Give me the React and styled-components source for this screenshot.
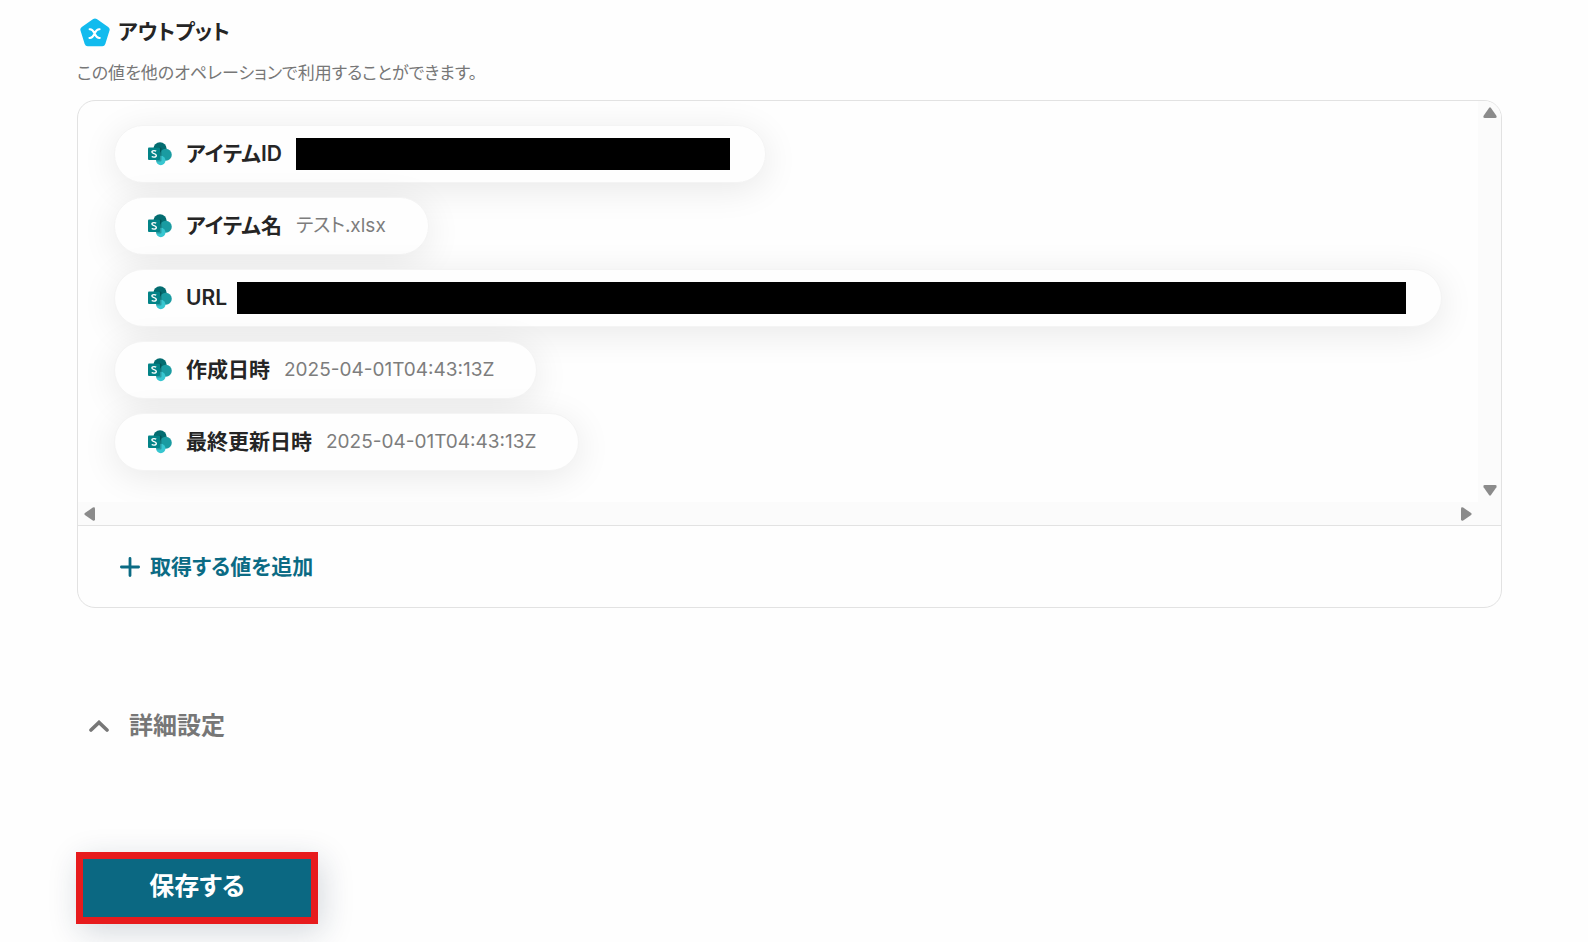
import React, { useState } from "react";
import styled, { createGlobalStyle } from "styled-components";

const GlobalStyle = createGlobalStyle`
  * {
    box-sizing: border-box;
  }
  body {
    margin: 0;
    background: #fefefe;
    color: #252525;
    font-family: Inter, 'Noto Sans CJK JP', sans-serif;
    font-feature-settings: 'palt';
    line-height: 1.5;
  }
  button {
    font-family: inherit;
    font-feature-settings: inherit;
    line-height: inherit;
    cursor: pointer;
  }
`

const Page = styled.main`
  display: flex;
  flex-direction: column;
  align-items: flex-start;
  padding: 14px 86px 18px 77px;
`

const Heading = styled.h2`
  display: flex;
  align-items: center;
  gap: 8px;
  margin: 0;
  padding-left: 3px;
  height: 36px;
  font-size: 21px;
  font-weight: 700;
`

const Description = styled.p`
  margin: 11px 0 15px;
  font-size: 17px;
  line-height: 24px;
  color: #777777;
`

const Panel = styled.section`
  width: 100%;
  border: 1px solid #e2e2e2;
  border-radius: 18px;
  overflow: hidden;
`

const ScrollArea = styled.div`
  display: grid;
  grid-template-columns: minmax(0, 1fr) 23px;
  grid-template-rows: auto 23px;
  border-bottom: 1px solid #e2e2e2;
`

const Track = styled.div`
  display: flex;
  flex-direction: ${props => props.$vertical ? "column" : "row"};
  justify-content: space-between;
  align-items: center;
  padding: ${props => props.$vertical ? "5px 0" : "0 5px"};
  background: #fbfbfb;
`

const Corner = styled.div`
  background: #fbfbfb;
`

const ArrowButton = styled.button`
  display: flex;
  padding: 0;
  border: none;
  background: none;
`

const ChipList = styled.ul`
  display: flex;
  flex-direction: column;
  align-items: flex-start;
  gap: 14px;
  margin: 0;
  padding: 24px 36px 31px;
  list-style: none;
  overflow: hidden;
`

const Chip = styled.li`
  display: flex;
  align-items: center;
  width: ${props => props.$full ? "100%" : "auto"};
  max-width: 100%;
  height: 58px;
  padding: 0 ${props => props.$masked ? "35px" : "42px"} 0 33px;
  border: 1px solid #f4f4f4;
  border-radius: 29px;
  background: #fefefe;
  box-shadow: 0 6px 36px rgba(0, 0, 0, 0.09);
`

const ChipLabel = styled.span`
  margin-left: 14px;
  font-size: 21px;
  font-weight: 600;
  white-space: nowrap;
`

const ChipValue = styled.span`
  margin-left: 14px;
  font-size: 19px;
  color: #7d7d7d;
  white-space: nowrap;
`

const Mask = styled.span`
  flex: ${props => props.$full ? "1" : "0 1 434px"};
  width: ${props => props.$full ? "auto" : "434px"};
  height: 32px;
  margin-left: ${props => props.$full ? "10px" : "14px"};
  background: #000000;
`

const AddButton = styled.button`
  display: flex;
  align-items: center;
  gap: 10px;
  height: 81px;
  padding: 0 42px;
  border: none;
  background: none;
  color: #0b6b84;
  font-size: 21px;
  font-weight: 600;
`

const DetailButton = styled.button`
  display: flex;
  align-items: center;
  gap: 20px;
  height: 40px;
  margin-top: 98px;
  padding: 0 12px;
  border: none;
  background: none;
  color: #777777;
  font-size: 24px;
  font-weight: 600;
`

const SaveButton = styled.button`
  width: 242px;
  height: 72px;
  margin: 106px 0 0 -1px;
  padding: 0 0 2px;
  border: 7px solid #e71b1d;
  background: #0b6882;
  color: #ffffff;
  font-size: 25px;
  font-weight: 700;
  box-shadow: 4px 8px 32px rgba(20, 45, 70, 0.18);
`

const OutputIcon = () => (
  <svg width="30" height="29" viewBox="0 0 30 29" aria-hidden="true">
    <path
      d="M13.2 1.1Q15 0 16.8 1.1L28.2 9Q30.2 10.4 29.5 12.6L25.3 26Q24.5 28.3 22.3 28.3H7.7Q5.5 28.3 4.7 26L.5 12.6Q-.2 10.4 1.8 9Z"
      fill="#12bbee"
    />
    <path
      d="M9.6 11.2C12.6 10.8 13.2 12.8 14.6 15.6S16.8 20.4 19.8 20M19.6 11.2C16.6 10.8 16 12.8 14.6 15.6S12.4 20.4 9.4 20"
      fill="none"
      stroke="#ffffff"
      strokeWidth="2"
      strokeLinecap="round"
    />
  </svg>
)

const SharePointIcon = () => (
  <svg width="24" height="24" viewBox="0 0 24 24" aria-hidden="true">
    <circle cx="12" cy="7" r="6.7" fill="#036c70" />
    <circle cx="17.8" cy="12.8" r="6" fill="#1a9ba1" />
    <circle cx="12.8" cy="18.5" r="4.7" fill="#37c6d0" />
    <path d="M6 5.5h6.5q1 0 1 1v12q0 1-1 1H8.3Q8 18.5 8.3 17L6 10Z" fill="#000000" opacity="0.22" />
    <rect y="5.5" width="12" height="12.5" rx="1" fill="#038387" />
    <path
      d="M8.2 9.2Q7.2 8.6 6 8.6C4.7 8.6 3.9 9.2 3.9 10.1C3.9 12.1 8.3 11.2 8.3 13.4C8.3 14.5 7.3 15.1 5.9 15.1Q4.6 15.1 3.7 14.5"
      fill="none"
      stroke="#ffffff"
      strokeWidth="1.4"
    />
  </svg>
)

const angles = { up: 0, right: 90, down: 180, left: 270 };

const Arrow = ({ direction, label }) => (
  <ArrowButton type="button" aria-label={label}>
    <svg width="14" height="14" viewBox="0 0 14 14">
      <path
        d="M6 1.9Q7 .8 8 1.9L13.4 9.8Q14.2 12 12.2 12H1.8Q-.2 12 .6 9.8Z"
        fill="#8b8b8b"
        transform={`rotate(${angles[direction]} 7 7)`}
      />
    </svg>
  </ArrowButton>
)

const PlusIcon = () => (
  <svg width="20" height="20" viewBox="0 0 20 20" aria-hidden="true">
    <path d="M10 1.4v17.2M1.4 10h17.2" stroke="currentColor" strokeWidth="2.8" strokeLinecap="round" />
  </svg>
)

const ChevronIcon = () => (
  <svg width="20" height="12" viewBox="0 0 20 12" aria-hidden="true">
    <path d="M2 10L10 2.4L18 10" fill="none" stroke="currentColor" strokeWidth="3.6" strokeLinecap="round" />
  </svg>
)

const items = [
  { label: "アイテムID", masked: true },
  { label: "アイテム名", value: "テスト.xlsx" },
  { label: "URL", masked: true, full: true },
  { label: "作成日時", value: "2025-04-01T04:43:13Z" },
  { label: "最終更新日時", value: "2025-04-01T04:43:13Z" },
];

function App() {
  const [open, setOpen] = useState(true);

  return(
    <>
      <GlobalStyle/>
      <Page>
        <Heading><OutputIcon/>アウトプット</Heading>
        <Description>この値を他のオペレーションで利用することができます。</Description>
        <Panel>
          <ScrollArea>
            <ChipList>
              {items.map(item => (
                <Chip key={item.label} $masked={item.masked} $full={item.full}>
                  <SharePointIcon/>
                  <ChipLabel>{item.label}</ChipLabel>
                  {item.masked ? <Mask $full={item.full}/> : <ChipValue>{item.value}</ChipValue>}
                </Chip>
              ))}
            </ChipList>
            <Track $vertical>
              <Arrow direction="up" label="上へ"/>
              <Arrow direction="down" label="下へ"/>
            </Track>
            <Track>
              <Arrow direction="left" label="左へ"/>
              <Arrow direction="right" label="右へ"/>
            </Track>
            <Corner/>
          </ScrollArea>
          <AddButton type="button"><PlusIcon/>取得する値を追加</AddButton>
        </Panel>
        <DetailButton type="button" aria-expanded={open} onClick={() => setOpen(!open)}>
          <ChevronIcon/>詳細設定
        </DetailButton>
        <SaveButton type="button">保存する</SaveButton>
      </Page>
    </>
  )
}

export default App
